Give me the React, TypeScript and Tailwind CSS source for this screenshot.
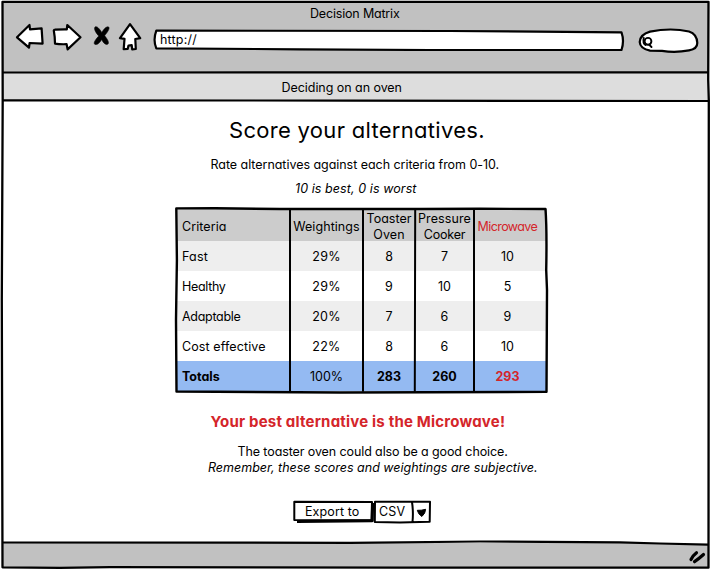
import type { ReactNode } from "react";

const ink = {
  fill: "none",
  stroke: "#000",
  strokeWidth: 2.2,
  strokeLinecap: "round",
  strokeLinejoin: "round",
} as const;

type Cell = { text: string; cls?: string };
type Row = { bg: string; cells: Cell[] };

const rows: Row[] = [
  {
    bg: "bg-[#eeeeee]",
    cells: [{ text: "Fast", cls: "tracking-[0.18px]" }, { text: "29%" }, { text: "8" }, { text: "7" }, { text: "10" }],
  },
  {
    bg: "bg-white",
    cells: [{ text: "Healthy", cls: "tracking-[-0.32px]" }, { text: "29%" }, { text: "9" }, { text: "10" }, { text: "5" }],
  },
  {
    bg: "bg-[#eeeeee]",
    cells: [{ text: "Adaptable", cls: "tracking-[-0.3px]" }, { text: "20%" }, { text: "7" }, { text: "6" }, { text: "9" }],
  },
  {
    bg: "bg-white",
    cells: [{ text: "Cost effective", cls: "tracking-[0.1px]" }, { text: "22%" }, { text: "8" }, { text: "6" }, { text: "10" }],
  },
  {
    bg: "bg-[#94baf2]",
    cells: [
      { text: "Totals", cls: "font-bold" },
      { text: "100%" },
      { text: "283", cls: "font-bold" },
      { text: "260", cls: "font-bold" },
      { text: "293", cls: "font-bold text-[#d4252a]" },
    ],
  },
];

function GridRow({ className, children }: { className: string; children: ReactNode }) {
  return (
    <div className={`grid grid-cols-[114px_73px_52px_59px_73px] items-center pt-[2px] ${className}`}>{children}</div>
  );
}

function Toolbar() {
  return (
    <div className="flex h-[48px] items-start pl-[15px]">
      <svg className="h-[28px] w-[30px]" viewBox="15 23 30 28">
        <path {...ink} fill="#fff" d="M17 37.3 L29.5 25 L30 29.4 L41.6 28.4 L42.6 43.6 L29.6 43 L29 47.7 Z" />
      </svg>
      <svg className="ml-[6px] h-[28px] w-[32px]" viewBox="51 23 32 28">
        <path {...ink} fill="#fff" d="M53.8 30.5 Q54 29.6 55 29.6 Q61 29.2 66.8 29.3 L67.3 25 L80.5 37.3 L67.6 49.4 L66.6 44.2 Q60 44.5 55 43.6 Q55 37 53.8 30.5 Z" />
      </svg>
      <svg className="ml-[8px] h-[28px] w-[20px]" viewBox="91 23 20 28">
        <path
          stroke="#000"
          strokeWidth="0.6"
          d="M95 27 C97 25.5 100 29.5 101.8 32.5 C103.5 29.5 106.5 26 108.6 27 C110.3 28.5 107 32.5 104.6 35.8 C107 38.5 109.5 42.5 108 44 C105.7 45.6 103 42.5 101.6 39.4 C100 42.5 97 45.5 94.7 44.2 C93 42.5 96.5 38.5 98.8 36 C96.5 33.5 93.5 29.5 95 27 Z"
        />
      </svg>
      <svg className="ml-[7px] h-[28px] w-[26px]" viewBox="118 23 26 28">
        <path {...ink} fill="#fff" d="M130 24.2 L120 38.2 L124.5 38.8 L123.7 49.2 L127.7 49 L128.5 45.5 L131.7 45.2 L132.2 49.4 L135.8 49 L135.3 39 L140.2 38.2 Z" />
      </svg>
      <div className="relative ml-[9px] mt-[6px] h-[22px] w-[472px]">
        <svg className="absolute inset-0 h-full w-full" viewBox="153 30 472 22">
          <path {...ink} fill="#fff" d="M156.3 31.6 L450 32 Q540 32.6 621.5 33.3 Q624.5 42 621.5 51 L430 51 L300 50.3 L156.3 49.4 Q152.8 41 156.3 31.6 Z" />
        </svg>
        <span className="relative block pl-[7px] leading-[22px] tracking-[0.2px]">http://</span>
      </div>
      <svg className="ml-[12px] mt-[4px] h-[28px] w-[62px]" viewBox="637 27 62 28">
        <path {...ink} fill="#fff" d="M650 31.6 Q671 27.5 689 31.5 Q697 34 697.3 43 Q697.3 49 689 50.4 Q675 53 662 50.8 L650 50.6 Q640 48.5 639.7 42 Q640 34.5 650 31.6 Z" />
        <circle {...ink} strokeWidth="1.9" cx="648" cy="41.3" r="3.4" />
        <path {...ink} strokeWidth="1.9" d="M643.8 38 Q642.5 43 645.5 45 M649.2 44.8 L651.5 47" />
      </svg>
    </div>
  );
}

function ScoreTable() {
  return (
    <div className="relative ml-[176px] mt-[6px] w-[371px] pt-[2px]">
      <GridRow className="h-[32px] bg-[#cccccc] text-center leading-[16px]">
        <span className="pl-[6px] text-left tracking-[0.07px]">Criteria</span>
        <span className="tracking-[0.06px]">Weightings</span>
        <span>
          <span className="block">Toaster</span>
          <span className="block tracking-[0.1px]">Oven</span>
        </span>
        <span>
          <span className="block tracking-[0.11px]">Pressure</span>
          <span className="block tracking-[-0.2px]">Cooker</span>
        </span>
        <span className="pl-[3.5px] text-left tracking-[-0.58px] text-[#d4252a]">Microwave</span>
      </GridRow>
      {rows.map(({ bg, cells }) => (
        <GridRow key={cells[0].text} className={`h-[30px] text-center ${bg}`}>
          {cells.map(({ text, cls = "" }, i) => (
            <span
              key={i}
              className={`${i === 0 ? "pl-[6px] text-left" : i === 4 ? "pr-[6px]" : ""} ${text.length === 3 && i === 1 ? "tracking-[0.26px]" : ""} ${cls}`}
            >
              {text}
            </span>
          ))}
        </GridRow>
      ))}
      <svg className="absolute left-[-2px] top-[-1px] h-[190px] w-[376px]" viewBox="174 206 376 190">
        <path {...ink} strokeWidth="2.4" d="M176.3 208.4 L215 208.3 L280 209 L420 209 L480 208.8 L545.5 209 Q547 230 546.2 270 L547 290 L546.5 391.8 L430 392.3 L340 392.5 L176.5 391.5 L176 320 L176.9 260 Z" />
        <path {...ink} strokeWidth="2" d="M290 210 V391 M363 210 V391 M415.2 210 L414.8 391 M474 210 V391" />
      </svg>
    </div>
  );
}

function ExportBar() {
  return (
    <div className="relative ml-[292px] mt-[24px] flex h-[24px] w-[140px]">
      <svg className="absolute inset-0 h-full w-full" viewBox="292 500 140 24">
        <path {...ink} strokeWidth="2" d="M294.3 501.8 L372 502 L371.5 520.3 L294.3 520 Z" />
        <path {...ink} strokeWidth="3" strokeLinecap="butt" d="M297 521.5 L372.3 520.8 L372.6 503" />
        <path {...ink} strokeWidth="2" d="M375 501.8 L430 501.8 L429.7 521.8 L400 522.5 L374.8 522 Z M412 502 Q413.5 512 412.5 522" />
        <path d="M417.3 510.3 L421.3 510.2 L425.6 509.3 Q425.5 513.5 421.8 516.5 Q418 514 417.3 510.3 Z" stroke="#000" strokeLinejoin="round" />
      </svg>
      <button className="relative w-[80px] pl-[13px] text-left leading-[22px] tracking-[0.1px]">Export to</button>
      <button className="relative w-[60px] pl-[7px] text-left leading-[22px] tracking-[0.2px]">CSV</button>
    </div>
  );
}

export default function App() {
  return (
    <div className="relative h-[570px] w-[711px] overflow-hidden whitespace-nowrap bg-white font-['Inter',sans-serif] text-[12.5px] text-black [font-feature-settings:'cv11']">
      <div className="flex h-[568px] w-[708px] flex-col pt-[2px]">
        <header className="ml-[2px] h-[71px] bg-[#c1c1c1]">
          <h1 className="ml-[308px] h-[21px] leading-[23px] tracking-[-0.18px]">Decision Matrix</h1>
          <div className="-ml-[2px]">
            <Toolbar />
          </div>
        </header>
        <div className="ml-[2px] h-[28px] bg-[#dddddd] pl-[279.5px] leading-[30px] tracking-[-0.05px]">
          Deciding on an oven
        </div>
        <main className="h-[442px] pt-[14px]">
          <h2 className="pl-[229px] text-[22px] leading-[30px] tracking-[0.3px]">Score your alternatives.</h2>
          <p className="mt-[8px] pl-[210.5px] leading-[24px] tracking-[-0.04px]">Rate alternatives against each criteria from 0-10.</p>
          <p className="pl-[295px] leading-[24px] tracking-[0.08px] italic">10 is best, 0 is worst</p>
          <ScoreTable />
          <p className="mt-[21px] pl-[210.5px] text-[15px] font-bold leading-[20px] tracking-[0.2px] text-[#d4252a]">
            Your best alternative is the Microwave!
          </p>
          <p className="mt-[12px] pl-[237.5px] leading-[16px] tracking-[-0.1px]">The toaster oven could also be a good choice.</p>
          <p className="pl-[208px] leading-[16px] italic">Remember, these scores and weightings are subjective.</p>
          <ExportBar />
        </main>
        <footer className="ml-[2px] h-[25px] bg-[#c1c1c1]" />
      </div>
      <svg className="pointer-events-none absolute inset-0 h-full w-full" viewBox="0 0 711 570">
        <path d="M480 540 L480 541.5 L620 542.3 L660 543.5 L708 544.6 L708 540 Z" fill="#fff" />
        <path {...ink} strokeWidth="2.3" d="M2.5 1.8 H708.5 L708.2 80 L708.8 100 L708.5 567.7 L400 567.6 L110 567.2 L60 567.8 L2.5 567.3 L1.8 300 L2.7 100 Z" />
        <path {...ink} d="M3 72.5 L130 72.5 L708 72.3 M3 100.3 L350 100.6 L708 101 M3 542.5 L350 542.8 L480 541.5 L620 542.3 L660 543.5 L708 544.6" />
        <path {...ink} strokeWidth="3.2" d="M691 559.5 Q693 555.5 696.5 552.8 M694.5 561.7 Q698.5 559 703.5 554.5" />
      </svg>
    </div>
  );
}
